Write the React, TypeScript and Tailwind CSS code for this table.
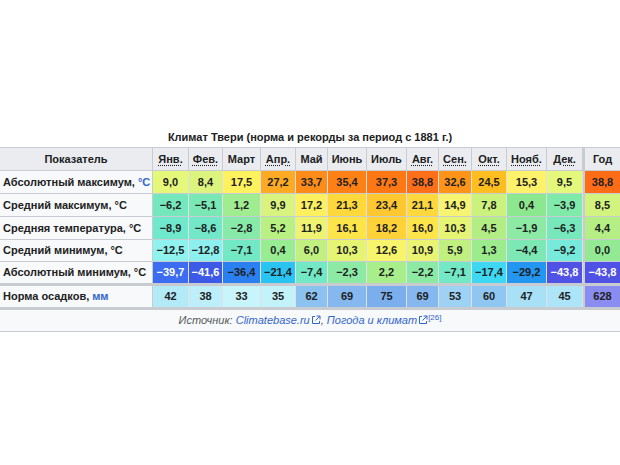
import React from "react";

type Col = { name: string; abbr: boolean; w: string };

const cols: Col[] = [
  { name: "Янв.", abbr: true, w: "w-[36px]" },
  { name: "Фев.", abbr: true, w: "w-[34px]" },
  { name: "Март", abbr: false, w: "w-[38px]" },
  { name: "Апр.", abbr: true, w: "w-[35px]" },
  { name: "Май", abbr: false, w: "w-[32px]" },
  { name: "Июнь", abbr: false, w: "w-[39px]" },
  { name: "Июль", abbr: false, w: "w-[40px]" },
  { name: "Авг.", abbr: true, w: "w-[32px]" },
  { name: "Сен.", abbr: true, w: "w-[33px]" },
  { name: "Окт.", abbr: true, w: "w-[35px]" },
  { name: "Нояб.", abbr: true, w: "w-[40px]" },
  { name: "Дек.", abbr: true, w: "w-[36px]" },
];

type Cell = { v: string; bg: string; white?: boolean };
type Row = { label: string; unit: string; unitLink: boolean; h: string; cells: Cell[] };

const c = (v: string, bg: string, white = false): Cell => ({ v, bg, white });

const rows: Row[] = [
  {
    label: "Абсолютный максимум, ",
    unit: "°C",
    unitLink: true,
    h: "h-[23px] border-b",
    cells: [
      c("9,0", "#e6f87a"),
      c("8,4", "#dcf47e"),
      c("17,5", "#fff25e"),
      c("27,2", "#ffaa24"),
      c("33,7", "#ff8c18"),
      c("35,4", "#ff8014"),
      c("37,3", "#ff7814"),
      c("38,8", "#ff6e18"),
      c("32,6", "#ff9418"),
      c("24,5", "#ffbe20"),
      c("15,3", "#fff26a"),
      c("9,5", "#e4f87c"),
      c("38,8", "#ff6c18"),
    ],
  },
  {
    label: "Средний максимум, ",
    unit: "°C",
    unitLink: false,
    h: "h-[23px] border-b",
    cells: [
      c("−6,2", "#74e8bc"),
      c("−5,1", "#7ae8b4"),
      c("1,2", "#a0ec90"),
      c("9,9", "#d8f47e"),
      c("17,2", "#fff060"),
      c("21,3", "#ffd83c"),
      c("23,4", "#ffc830"),
      c("21,1", "#ffd83e"),
      c("14,9", "#f6f470"),
      c("7,8", "#ccf27e"),
      c("0,4", "#8ce88e"),
      c("−3,9", "#80eaaa"),
      c("8,5", "#d2f47e"),
    ],
  },
  {
    label: "Средняя температура, ",
    unit: "°C",
    unitLink: false,
    h: "h-[23px] border-b",
    cells: [
      c("−8,9", "#70e8cc"),
      c("−8,6", "#72e8c8"),
      c("−2,8", "#88eaa8"),
      c("5,2", "#b8f082"),
      c("11,9", "#eef472"),
      c("16,1", "#ffe44a"),
      c("18,2", "#ffd23a"),
      c("16,0", "#ffe44a"),
      c("10,3", "#e6f474"),
      c("4,5", "#b2ee84"),
      c("−1,9", "#8ceaa4"),
      c("−6,3", "#76e8bc"),
      c("4,4", "#b4ee84"),
    ],
  },
  {
    label: "Средний минимум, ",
    unit: "°C",
    unitLink: false,
    h: "h-[22px] border-b",
    cells: [
      c("−12,5", "#90f2ee"),
      c("−12,8", "#8ef0ee"),
      c("−7,1", "#72e8c4"),
      c("0,4", "#98ec92"),
      c("6,0", "#c2f080"),
      c("10,3", "#e6f474"),
      c("12,6", "#f8f46c"),
      c("10,9", "#eaf472"),
      c("5,9", "#c0f080"),
      c("1,3", "#9cec8e"),
      c("−4,4", "#7ee8b4"),
      c("−9,2", "#78eadb"),
      c("0,0", "#94ea94"),
    ],
  },
  {
    label: "Абсолютный минимум, ",
    unit: "°C",
    unitLink: false,
    h: "h-[24px] border-b-[3px]",
    cells: [
      c("−39,7", "#3c6cf0", true),
      c("−41,6", "#3c5ae6", true),
      c("−36,4", "#2a80f0"),
      c("−21,4", "#2ac4f2"),
      c("−7,4", "#72e8c4"),
      c("−2,3", "#8ceaa4"),
      c("2,2", "#a8ee8a"),
      c("−2,2", "#8ceaa4"),
      c("−7,1", "#72e8c4"),
      c("−17,4", "#3ed8f2"),
      c("−29,2", "#2296f0"),
      c("−43,8", "#5052e6", true),
      c("−43,8", "#5052e6", true),
    ],
  },
  {
    label: "Норма осадков, ",
    unit: "мм",
    unitLink: true,
    h: "h-[24px] border-b-[3px]",
    cells: [
      c("42", "#b2eaf8"),
      c("38", "#bdeefa"),
      c("33", "#c8f4fc"),
      c("35", "#c4f2fb"),
      c("62", "#8cc2f0"),
      c("69", "#84b8ee"),
      c("75", "#7aaeec"),
      c("69", "#84b8ee"),
      c("53", "#9ed2f4"),
      c("60", "#90c6f2"),
      c("47", "#a8e0f6"),
      c("45", "#aee4f8"),
      c("628", "#8a8cf0"),
    ],
  },
];

function ExtIcon() {
  return (
    <svg width="10" height="10" viewBox="0 0 10 10" className="inline-block align-baseline ml-[1px] mb-[-1px]" fill="none">
      <path d="M4 1.5H1.5V8.5H8.5V6" stroke="#3366cc" strokeWidth="1" />
      <path d="M5.5 1H9V4.5" stroke="#3366cc" strokeWidth="1" />
      <path d="M9 1L4.5 5.5" stroke="#3366cc" strokeWidth="1" />
    </svg>
  );
}

export default function App() {
  return (
    <div
      className="w-[620px] h-[465px] bg-white overflow-hidden text-[#202122]"
      style={{ fontFamily: '"Liberation Sans", Arial, sans-serif' }}
    >
      <div className="pt-[128px] h-[147px] flex items-start justify-center">
        <div className="h-[18px] flex items-center text-[11px] font-bold">
          Климат Твери (норма и рекорды за период с 1881 г.)
        </div>
      </div>

      <div className="border-t border-[#c8ccd1] text-[11px] font-bold">
        {/* header */}
        <div className="flex h-[23px] border-b border-[#c8ccd1] bg-[#eaecf0]">
          <div className="w-[153px] border-r border-[#c8ccd1] flex items-center justify-center">
            Показатель
          </div>
          {cols.map((col) => (
            <div
              key={col.name}
              className={`${col.w} border-r border-[#c8ccd1] flex items-center justify-center`}
            >
              <span className={col.abbr ? "underline decoration-dotted underline-offset-2" : ""}>
                {col.name}
              </span>
            </div>
          ))}
          <div className="w-[37px] border-l-2 border-[#c8ccd1] flex items-center justify-center">
            Год
          </div>
        </div>

        {rows.map((row) => (
          <div key={row.label} className={`flex ${row.h} border-[#c8ccd1]`}>
            <div className="w-[153px] border-r border-[#c8ccd1] bg-[#f8f9fa] flex items-center pl-[3px] whitespace-nowrap">
              {row.label}
              <span className={row.unitLink ? "text-[#3366cc] ml-[3px]" : "ml-[3px]"}>{row.unit}</span>
            </div>
            {row.cells.slice(0, 12).map((cell, i) => (
              <div
                key={i}
                className={`${cols[i].w} border-r border-[#dfe2e5] flex items-center justify-center ${
                  cell.white ? "text-white" : ""
                }`}
                style={{ backgroundColor: cell.bg }}
              >
                {cell.v}
              </div>
            ))}
            <div
              className={`w-[37px] border-l-2 border-[#c8ccd1] flex items-center justify-center ${
                row.cells[12].white ? "text-white" : ""
              }`}
              style={{ backgroundColor: row.cells[12].bg }}
            >
              {row.cells[12].v}
            </div>
          </div>
        ))}

        {/* source */}
        <div className="h-[22px] border-b border-[#c8ccd1] bg-[#f8f9fa] flex items-center justify-center font-normal italic text-[11px] text-[#54595d]">
          <span>
            Источник:{" "}
            <span className="text-[#3366cc]">Climatebase.ru</span>
            <ExtIcon />
            <span>, </span>
            <span className="text-[#3366cc]">Погода и климат</span>
            <ExtIcon />
            <sup className="text-[#3366cc] text-[8px] not-italic">[26]</sup>
          </span>
        </div>
      </div>
    </div>
  );
}
